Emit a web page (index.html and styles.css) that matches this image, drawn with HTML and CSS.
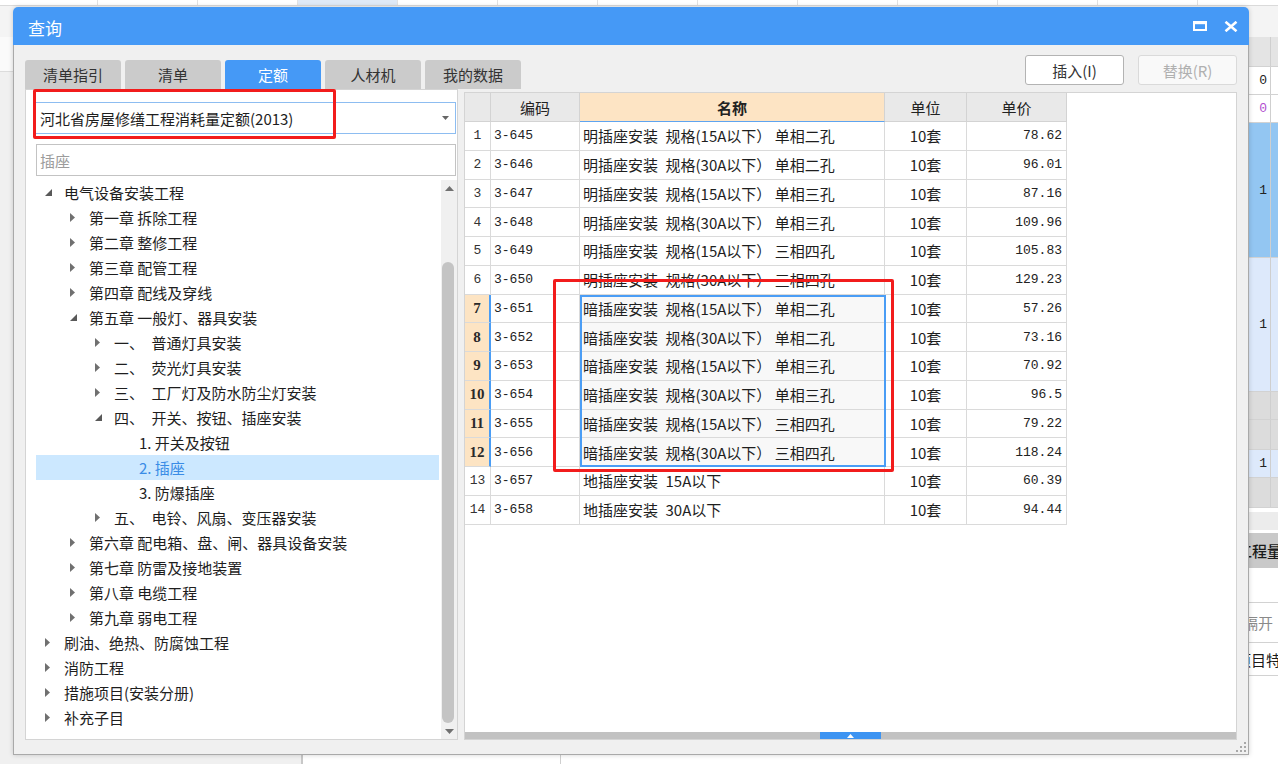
FILE: index.html
```html
<!DOCTYPE html>
<html lang="zh-CN">
<head>
<meta charset="utf-8">
<title>查询</title>
<link rel="stylesheet" href="styles.css">
</head>
<body>
<div class="app">
  <div class="app-top">
    <div class="app-cells"><span class="c-first"></span><span></span><span></span><span class="c-blue"></span><span></span><span></span><span></span><span></span><span></span><span></span><span></span><span></span><span></span></div>
    <div class="app-bar"></div>
  </div>
  <div class="app-main">
    <div class="app-left"><div class="app-left-top"></div><div class="app-left-rest"></div></div>
    <div class="app-grid">
      <div class="gr gr-hdr"><div class="gc1"></div><div class="gc2"></div></div>
      <div class="gr gr-28"><div class="gc1">0</div><div class="gc2"></div></div>
      <div class="gr gr-28"><div class="gc1 purple">0</div><div class="gc2"></div></div>
      <div class="gr gr-blue"><div class="gc1">1</div><div class="gc2"></div></div>
      <div class="gr gr-lblue"><div class="gc1">1</div><div class="gc2"></div></div>
      <div class="gr gr-gray gr-28"><div class="gc1"></div><div class="gc2"></div></div>
      <div class="gr gr-gray gr-30"><div class="gc1"></div><div class="gc2"></div></div>
      <div class="gr gr-lb28"><div class="gc1">1</div><div class="gc2"></div></div>
      <div class="gr gr-gray gr-30"><div class="gc1"></div><div class="gc2"></div></div>
      <div class="gr gr-4"></div>
      <div class="gr gr-18"></div>
      <div class="gr gr-3"></div>
      <div class="gr gr-title"><span class="gt-text">工程量</span></div>
      <div class="gr gr-35"></div>
      <div class="gr gr-40"><span class="gt-sep">隔开</span></div>
      <div class="gr gr-33"><span class="gt-item">项目特</span></div>
      <div class="gr gr-fill"></div>
    </div>
  </div>
  <div class="app-bottom"><span class="ab-1"></span><span class="ab-2"></span><span class="ab-3"></span></div>
</div>

<div class="dialog">
  <div class="titlebar">
    <span class="title">查询</span>
    <div class="win-btns">
      <svg class="ico-max" width="14" height="10" viewBox="0 0 14 10"><rect x="1" y="1.5" width="12" height="7.5" fill="none" stroke="#fff" stroke-width="2"/><rect x="0" y="0" width="14" height="3.2" fill="#fff"/></svg>
      <svg class="ico-close" width="14" height="11" viewBox="0 0 14 11"><path d="M1.5 0.8 L12.5 10.2 M12.5 0.8 L1.5 10.2" stroke="#fff" stroke-width="2.6" fill="none"/></svg>
    </div>
  </div>
  <div class="dlg-body">
    <div class="toolbar">
      <div class="tabs">
        <div class="tab">清单指引</div>
        <div class="tab">清单</div>
        <div class="tab active">定额</div>
        <div class="tab">人材机</div>
        <div class="tab">我的数据</div>
      </div>
      <div class="actions">
        <div class="btn">插入(I)</div>
        <div class="btn disabled">替换(R)</div>
      </div>
    </div>
    <div class="content">
      <div class="left-panel">
        <div class="select"><span>河北省房屋修缮工程消耗量定额(2013)</span><svg width="7" height="4" viewBox="0 0 7 4"><path d="M0 0 L7 0 L3.5 4Z" fill="#666"/></svg></div>
        <div class="search">插座</div>
        <div class="tree-wrap">
          <div class="tree">
            <div class="node l0"><span class="tg"><svg width="7" height="7" viewBox="0 0 7 7"><path d="M7 0 L7 7 L0 7Z" fill="#595959"/></svg></span><span>电气设备安装工程</span></div>
            <div class="node l1"><span class="tg"><svg width="5" height="9" viewBox="0 0 5 9"><path d="M0 0 L5 4.5 L0 9Z" fill="#707070"/></svg></span><span>第一章 拆除工程</span></div>
            <div class="node l1"><span class="tg"><svg width="5" height="9" viewBox="0 0 5 9"><path d="M0 0 L5 4.5 L0 9Z" fill="#707070"/></svg></span><span>第二章 整修工程</span></div>
            <div class="node l1"><span class="tg"><svg width="5" height="9" viewBox="0 0 5 9"><path d="M0 0 L5 4.5 L0 9Z" fill="#707070"/></svg></span><span>第三章 配管工程</span></div>
            <div class="node l1"><span class="tg"><svg width="5" height="9" viewBox="0 0 5 9"><path d="M0 0 L5 4.5 L0 9Z" fill="#707070"/></svg></span><span>第四章 配线及穿线</span></div>
            <div class="node l1"><span class="tg"><svg width="7" height="7" viewBox="0 0 7 7"><path d="M7 0 L7 7 L0 7Z" fill="#595959"/></svg></span><span>第五章 一般灯、器具安装</span></div>
            <div class="node l2"><span class="tg"><svg width="5" height="9" viewBox="0 0 5 9"><path d="M0 0 L5 4.5 L0 9Z" fill="#707070"/></svg></span><span>一、&ensp;普通灯具安装</span></div>
            <div class="node l2"><span class="tg"><svg width="5" height="9" viewBox="0 0 5 9"><path d="M0 0 L5 4.5 L0 9Z" fill="#707070"/></svg></span><span>二、&ensp;荧光灯具安装</span></div>
            <div class="node l2"><span class="tg"><svg width="5" height="9" viewBox="0 0 5 9"><path d="M0 0 L5 4.5 L0 9Z" fill="#707070"/></svg></span><span>三、&ensp;工厂灯及防水防尘灯安装</span></div>
            <div class="node l2"><span class="tg"><svg width="7" height="7" viewBox="0 0 7 7"><path d="M7 0 L7 7 L0 7Z" fill="#595959"/></svg></span><span>四、&ensp;开关、按钮、插座安装</span></div>
            <div class="node l3"><span class="tg"></span><span>1. 开关及按钮</span></div>
            <div class="node l3 selected"><span class="tg"></span><span>2. 插座</span></div>
            <div class="node l3"><span class="tg"></span><span>3. 防爆插座</span></div>
            <div class="node l2"><span class="tg"><svg width="5" height="9" viewBox="0 0 5 9"><path d="M0 0 L5 4.5 L0 9Z" fill="#707070"/></svg></span><span>五、&ensp;电铃、风扇、变压器安装</span></div>
            <div class="node l1"><span class="tg"><svg width="5" height="9" viewBox="0 0 5 9"><path d="M0 0 L5 4.5 L0 9Z" fill="#707070"/></svg></span><span>第六章 配电箱、盘、闸、器具设备安装</span></div>
            <div class="node l1"><span class="tg"><svg width="5" height="9" viewBox="0 0 5 9"><path d="M0 0 L5 4.5 L0 9Z" fill="#707070"/></svg></span><span>第七章 防雷及接地装置</span></div>
            <div class="node l1"><span class="tg"><svg width="5" height="9" viewBox="0 0 5 9"><path d="M0 0 L5 4.5 L0 9Z" fill="#707070"/></svg></span><span>第八章 电缆工程</span></div>
            <div class="node l1"><span class="tg"><svg width="5" height="9" viewBox="0 0 5 9"><path d="M0 0 L5 4.5 L0 9Z" fill="#707070"/></svg></span><span>第九章 弱电工程</span></div>
            <div class="node l0"><span class="tg"><svg width="5" height="9" viewBox="0 0 5 9"><path d="M0 0 L5 4.5 L0 9Z" fill="#707070"/></svg></span><span>刷油、绝热、防腐蚀工程</span></div>
            <div class="node l0"><span class="tg"><svg width="5" height="9" viewBox="0 0 5 9"><path d="M0 0 L5 4.5 L0 9Z" fill="#707070"/></svg></span><span>消防工程</span></div>
            <div class="node l0"><span class="tg"><svg width="5" height="9" viewBox="0 0 5 9"><path d="M0 0 L5 4.5 L0 9Z" fill="#707070"/></svg></span><span>措施项目(安装分册)</span></div>
            <div class="node l0"><span class="tg"><svg width="5" height="9" viewBox="0 0 5 9"><path d="M0 0 L5 4.5 L0 9Z" fill="#707070"/></svg></span><span>补充子目</span></div>
          </div>
          <div class="vscroll">
            <div class="vs-arrow"><svg width="9" height="5" viewBox="0 0 9 5"><path d="M0 5 L4.5 0 L9 5Z" fill="#707070"/></svg></div>
            <div class="vs-track"><div class="vs-thumb"></div></div>
            <div class="vs-arrow"><svg width="9" height="5" viewBox="0 0 9 5"><path d="M0 0 L9 0 L4.5 5Z" fill="#707070"/></svg></div>
          </div>
        </div>
      </div>

      <div class="right-panel">
        <div class="grid-area">
          <div class="tbl">
            <div class="tr th-row">
              <div class="th">&nbsp;</div><div class="th">编码</div><div class="th peach">名称</div><div class="th">单位</div><div class="th">单价</div>
            </div>
            <div class="tr"><div class="td c-num">1</div><div class="td c-code">3-645</div><div class="td c-name">明插座安装&ensp;规格(15A以下） 单相二孔</div><div class="td c-unit">10套</div><div class="td c-price">78.62</div></div>
            <div class="tr"><div class="td c-num">2</div><div class="td c-code">3-646</div><div class="td c-name">明插座安装&ensp;规格(30A以下） 单相二孔</div><div class="td c-unit">10套</div><div class="td c-price">96.01</div></div>
            <div class="tr"><div class="td c-num">3</div><div class="td c-code">3-647</div><div class="td c-name">明插座安装&ensp;规格(15A以下） 单相三孔</div><div class="td c-unit">10套</div><div class="td c-price">87.16</div></div>
            <div class="tr"><div class="td c-num">4</div><div class="td c-code">3-648</div><div class="td c-name">明插座安装&ensp;规格(30A以下） 单相三孔</div><div class="td c-unit">10套</div><div class="td c-price">109.96</div></div>
            <div class="tr"><div class="td c-num">5</div><div class="td c-code">3-649</div><div class="td c-name">明插座安装&ensp;规格(15A以下） 三相四孔</div><div class="td c-unit">10套</div><div class="td c-price">105.83</div></div>
            <div class="tr"><div class="td c-num">6</div><div class="td c-code">3-650</div><div class="td c-name">明插座安装&ensp;规格(30A以下） 三相四孔</div><div class="td c-unit">10套</div><div class="td c-price">129.23</div></div>
            <div class="tr sel"><div class="td c-num">7</div><div class="td c-code">3-651</div><div class="td c-name">暗插座安装&ensp;规格(15A以下） 单相二孔</div><div class="td c-unit">10套</div><div class="td c-price">57.26</div></div>
            <div class="tr sel"><div class="td c-num">8</div><div class="td c-code">3-652</div><div class="td c-name">暗插座安装&ensp;规格(30A以下） 单相二孔</div><div class="td c-unit">10套</div><div class="td c-price">73.16</div></div>
            <div class="tr sel"><div class="td c-num">9</div><div class="td c-code">3-653</div><div class="td c-name">暗插座安装&ensp;规格(15A以下） 单相三孔</div><div class="td c-unit">10套</div><div class="td c-price">70.92</div></div>
            <div class="tr sel"><div class="td c-num">10</div><div class="td c-code">3-654</div><div class="td c-name">暗插座安装&ensp;规格(30A以下） 单相三孔</div><div class="td c-unit">10套</div><div class="td c-price">96.5</div></div>
            <div class="tr sel"><div class="td c-num">11</div><div class="td c-code">3-655</div><div class="td c-name">暗插座安装&ensp;规格(15A以下） 三相四孔</div><div class="td c-unit">10套</div><div class="td c-price">79.22</div></div>
            <div class="tr sel"><div class="td c-num">12</div><div class="td c-code">3-656</div><div class="td c-name">暗插座安装&ensp;规格(30A以下） 三相四孔</div><div class="td c-unit">10套</div><div class="td c-price">118.24</div></div>
            <div class="tr"><div class="td c-num">13</div><div class="td c-code">3-657</div><div class="td c-name">地插座安装&ensp;15A以下</div><div class="td c-unit">10套</div><div class="td c-price">60.39</div></div>
            <div class="tr"><div class="td c-num">14</div><div class="td c-code">3-658</div><div class="td c-name">地插座安装&ensp;30A以下</div><div class="td c-unit">10套</div><div class="td c-price">94.44</div></div>
          </div>
          <div class="sel-box"></div>
        </div>
        <div class="hscroll"><div class="hs-thumb"><svg width="7" height="4" viewBox="0 0 7 4"><path d="M0 4 L3.5 0 L7 4Z" fill="#fff"/></svg></div></div>
      </div>
    </div>
    <svg class="grip" width="10" height="10" viewBox="0 0 10 10"><g fill="#a8a8a8"><rect x="8" y="0" width="2" height="2"/><rect x="4" y="4" width="2" height="2"/><rect x="8" y="4" width="2" height="2"/><rect x="0" y="8" width="2" height="2"/><rect x="4" y="8" width="2" height="2"/><rect x="8" y="8" width="2" height="2"/></g></svg>
  </div>
</div>

<div class="mark mark1"></div>
<div class="mark mark2"></div>
</body>
</html>
```

FILE: styles.css
```css
* { box-sizing: border-box; }
html, body { margin: 0; padding: 0; }
body {
  width: 1278px;
  height: 764px;
  overflow: hidden;
  position: relative;
  font-family: "Noto Sans CJK SC", "Noto Sans", sans-serif;
  font-size: 15px;
  color: #222;
  background: #fff;
}

/* ---------- background application ---------- */
.app { display: flex; flex-direction: column; height: 764px; }
.app-top { height: 37px; display: flex; flex-direction: column; }
.app-cells { height: 6px; display: flex; background: #fff; border-bottom: 1px solid #dadada; }
.app-cells span { flex: none; width: 100px; border-right: 1px solid #e2e2e2; }
.app-cells .c-first { width: 98px; }
.app-cells .c-blue { background: #dfe9f6; }
.app-bar { flex: 1; background: #f4f4f4; }
.app-main { height: 718px; display: flex; }
.app-left { flex: 1; display: flex; flex-direction: column; }
.app-left-top { height: 35px; background: #fafafa; border-bottom: 1px solid #dcdcdc; }
.app-left-rest { flex: 1; background: #f0f0f0; }
.app-grid { width: 68px; display: flex; flex-direction: column; background: #fff; overflow: hidden; }
.gr { display: flex; flex: none; border-bottom: 1px solid #d2d2d2; overflow: hidden; }
.gc1 {
  width: 61px; border-right: 1px solid #cfcfcf;
  display: flex; align-items: center; justify-content: flex-end;
  padding-right: 3px;
  font-family: "Liberation Mono", monospace; font-size: 13px; color: #222;
}
.gc1.purple { color: #b24fcf; }
.gc2 { flex: 1; }
.gr-hdr { height: 30px; background: #e4e4e4; }
.gr-28 { height: 28px; }
.gr-30 { height: 30px; }
.gr-blue { height: 135px; background: #93c6f2; }
.gr-lblue { height: 134px; background: #dde9fb; }
.gr-gray { background: #dcdcdc; }
.gr-lb28 { height: 28px; background: #dde9fb; }
.gr-4 { height: 4px; border: none; }
.gr-18 { height: 18px; background: #ececec; border: none; }
.gr-3 { height: 3px; border: none; }
.gr-title { height: 35px; background: #c9c9c9; align-items: center; padding-left: 27px; border: none; }
.gt-text { font-weight: 500; white-space: nowrap; color: #1a1a1a; }
.gr-35 { height: 35px; }
.gr-40 { height: 40px; align-items: center; padding-left: 33px; }
.gt-sep { color: #8a8a8a; white-space: nowrap; }
.gr-33 { height: 33px; align-items: center; padding-left: 26px; }
.gt-item { white-space: nowrap; color: #1a1a1a; }
.gr-fill { flex: 1; border: none; }
.app-bottom { height: 9px; display: flex; background: #fff; }
.ab-1 { width: 303px; background: #f0f0f0; border-right: 2px solid #c8c8c8; }
.ab-2 { width: 258px; border-right: 1px solid #cfcfcf; }
.ab-3 { flex: 1; }

/* ---------- dialog ---------- */
.dialog {
  position: absolute;
  left: 13px; top: 7px;
  width: 1236px; height: 748px;
  display: flex; flex-direction: column;
  box-shadow: 0 0 5px rgba(0, 0, 0, 0.18);
  border-radius: 5px 5px 0 0;
}
.titlebar {
  height: 38px; flex: none;
  background: #4599f6;
  border-radius: 5px 5px 0 0;
  display: flex; align-items: center; justify-content: space-between;
  padding: 0 11px 0 15px;
}
.title { color: #fff; font-size: 17px; padding-top: 3px; }
.win-btns { display: flex; align-items: center; gap: 17px; }
.win-btns svg { display: block; }

.dlg-body {
  flex: 1;
  position: relative;
  background: #f0f0f0;
  border: 1px solid #a9a9a9; border-top: none;
  display: flex; flex-direction: column;
  padding: 0 11px 14px 11px;
}
.toolbar { height: 44px; flex: none; display: flex; justify-content: space-between; align-items: flex-start; }
.tabs { display: flex; gap: 4px; align-self: flex-end; }
.tab {
  width: 96px; height: 29px;
  background: #cbcbcb; color: #333;
  border-radius: 3px 3px 0 0;
  display: flex; align-items: center; justify-content: center;
  font-size: 15px;
}
.tab.active { background: #4599f6; color: #fff; }
.actions { display: flex; gap: 14px; margin-top: 10px; }
.btn {
  width: 99px; height: 30px;
  background: #fff; border: 1px solid #b3b3b3; border-radius: 3px;
  display: flex; align-items: center; justify-content: center;
  color: #333; font-size: 15px;
}
.btn.disabled { background: #f9f9f9; border-color: #dadada; color: #b0b0b0; }

.content { height: 651px; flex: none; display: flex; gap: 6px; }

.left-panel {
  width: 433px; flex: none;
  background: #fff; border: 1px solid #d4d4d4;
  display: flex; flex-direction: column;
  padding: 12px 0 0 9px;
}
.select {
  height: 32px; flex: none; margin-right: 1px;
  border: 1px solid #8dbdf1;
  display: flex; align-items: center; justify-content: space-between;
  padding: 0 6px 0 4px;
  color: #1e1e1e; white-space: nowrap;
}
.select svg { display: block; }
.search {
  height: 32px; flex: none;
  margin: 10px 1px 0 1px;
  border: 1px solid #c3c3c3;
  padding-left: 3px;
  display: flex; align-items: center;
  color: #9c9c9c;
}
.tree-wrap { flex: 1; display: flex; margin-top: 4px; margin-left: 1px; min-height: 0; }
.tree { flex: 1; padding-right: 2px; overflow: hidden; }
.node {
  height: 25px; display: flex; align-items: center;
  white-space: nowrap; color: #1e1e1e;
}
.node.l0 { padding-left: 9px; }
.node.l1 { padding-left: 34px; }
.node.l2 { padding-left: 59px; }
.node.l3 { padding-left: 84px; }
.tg { width: 19px; flex: none; display: flex; align-items: center; }
.tg svg { display: block; }
.node.selected { background: #cce8ff; color: #3a8ce6; }

.vscroll { width: 16px; flex: none; background: #f0f0f0; display: flex; flex-direction: column; }
.vs-arrow { height: 16px; flex: none; display: flex; align-items: center; justify-content: center; }
.vs-arrow svg { display: block; }
.vs-track { flex: 1; display: flex; flex-direction: column; padding-top: 66px; }
.vs-thumb { flex: 1; margin: 0 3px 0 1px; border-radius: 6px; background: #c4c4c4; }

.right-panel {
  flex: 1; margin-top: 3px;
  background: #fff; border: 1px solid #d4d4d4;
  display: flex; flex-direction: column;
}
.grid-area { flex: 1; position: relative; }
.tbl { width: 602px; }
.tr {
  display: grid;
  grid-template-columns: 26px 89px 305px 82px 100px;
  height: 28.75px;
}
.th-row { height: 29px; }
.th, .td {
  border-right: 1px solid #dadada; border-bottom: 1px solid #dadada;
  display: flex; align-items: center;
  white-space: nowrap; overflow: hidden;
}
.th { background: #e9e9e9; justify-content: center; color: #222; border-color: #d3d3d3; }
.th.peach { background: #fde4c4; font-weight: bold; border-bottom-color: #5ea4f0; }
.c-num { justify-content: center; font-family: "Liberation Mono", monospace; font-size: 13px; color: #333; }
.c-code { padding-left: 3px; font-family: "Liberation Mono", monospace; font-size: 13px; color: #222; }
.c-name { padding-left: 3px; color: #1e1e1e; }
.c-unit { justify-content: center; color: #1e1e1e; }
.c-price { justify-content: flex-end; padding-right: 4px; font-family: "Liberation Mono", monospace; font-size: 13px; color: #222; }
.tr.sel .c-num {
  background: #fde4c3;
  font-family: "Liberation Serif", serif; font-weight: bold; font-size: 15px; color: #2a2a2a;
  border-right: 2px solid #4a9df5;
}
.tr.sel .c-name { background: #f8f8f8; }
.sel-box {
  position: absolute;
  left: 115px; top: 201.5px;
  width: 306px; height: 172.5px;
  border: 2px solid #4a9df5;
  pointer-events: none;
}
.hscroll { height: 7px; flex: none; background: #c2c2c2; display: flex; }
.hs-thumb {
  margin-left: 355px; width: 61px; height: 7px;
  background: #3d94f2;
  display: flex; align-items: center; justify-content: center;
}
.hs-thumb svg { display: block; }
.grip { position: absolute; right: 2px; bottom: 2px; display: block; }

/* ---------- red annotation boxes ---------- */
.mark { position: absolute; border: 3px solid #f21c1c; border-radius: 2px; pointer-events: none; }
.mark1 { left: 33px; top: 89px; width: 303px; height: 50px; }
.mark2 { left: 553px; top: 279px; width: 341px; height: 193px; }
```
